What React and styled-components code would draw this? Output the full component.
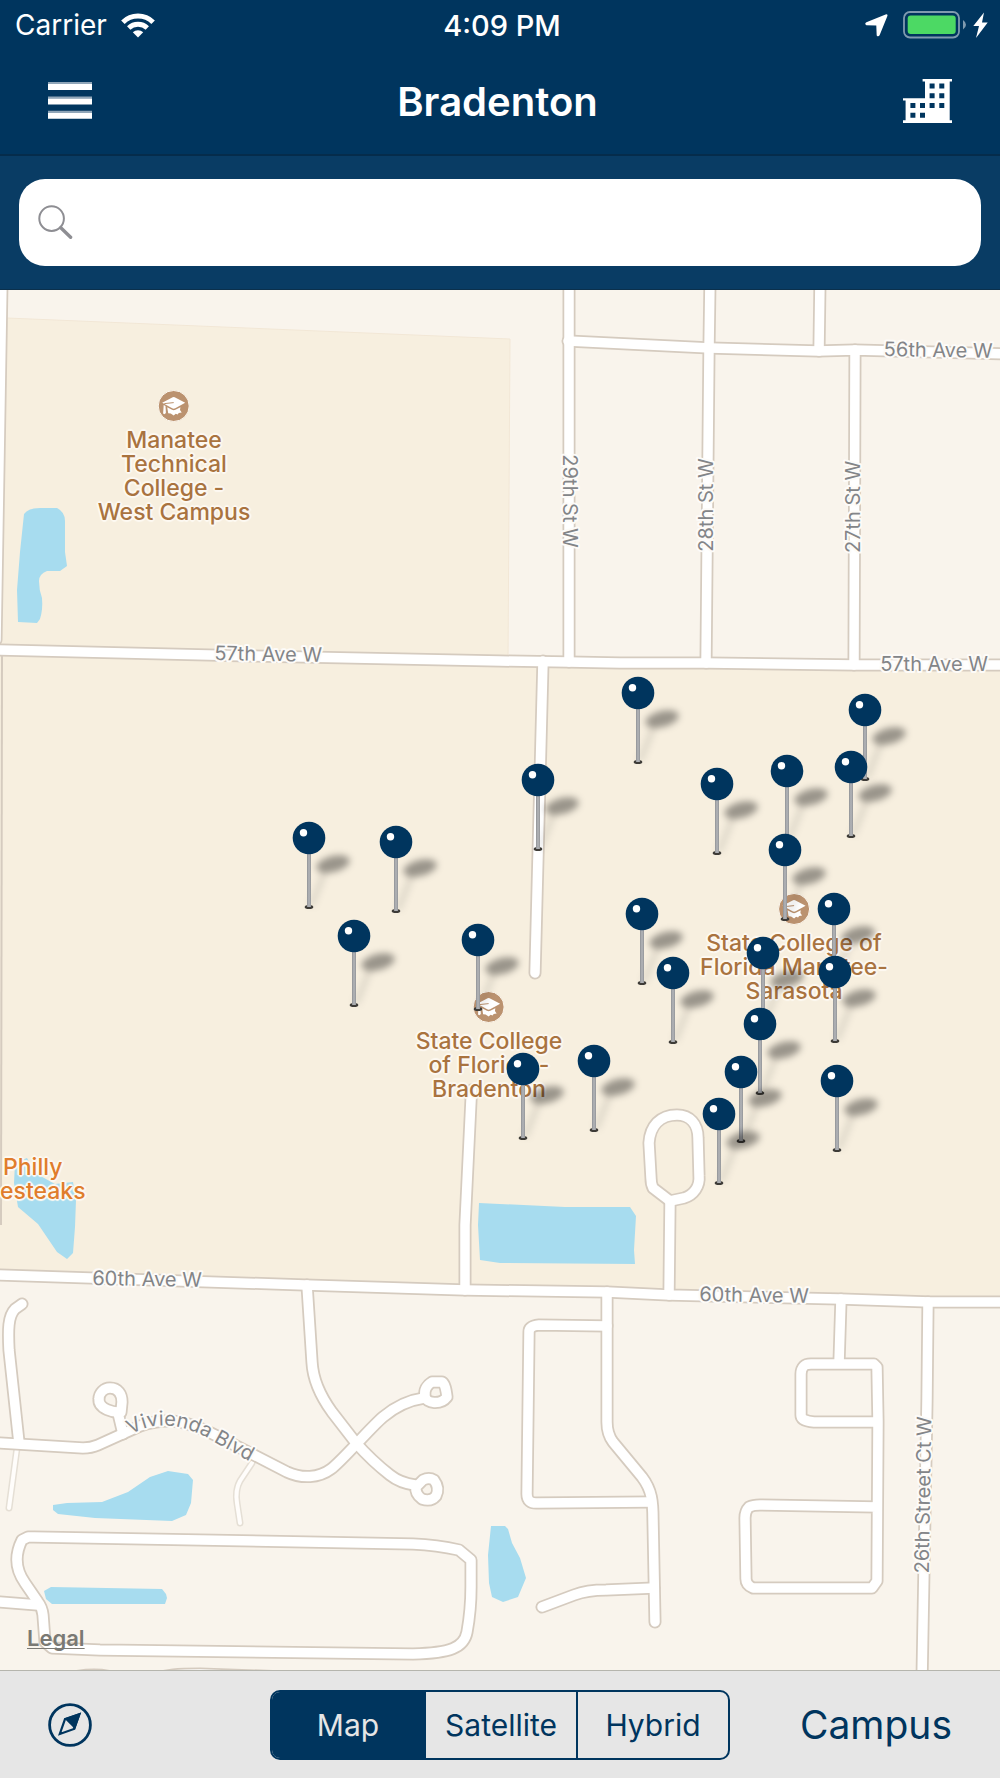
import { useState } from "react";
import styled, { createGlobalStyle } from "styled-components";

// the map is drawn in its own units, everything on it is placed in percent of these
const MAP_WIDTH = 1000;
const MAP_HEIGHT = 1380;

const streets = [
  // 57th, 56th and 60th Ave
  "M-10 360 L0 360 L250 366 L500 371 L568 372 L620 373 L707 373 L855 375 L1010 375",
  "M568 51 L710 58 L818 61 L855 60 L1010 64",
  "M-10 985 L0 985 L305 995 L465 1000 L607 1002 L669 1005 L840 1009 L930 1012 L1010 1012",
  // north side
  "M2 -10 L-4 350",
  "M569 -10 L569 372",
  "M710 -10 L709 58 L706 373",
  "M820 -10 L819 61",
  "M855 60 L854 375",
  "M543 371 L535 683",
  // campus
  "M472 800 L471 810 L465 935 L465 1000",
  "M670 911 L653 898 Q651 894 651 888 L649 853 C650 836 660 825 677 825 C690 825 698 834 698 848 L699 886 C700 896 694 905 684 908 Z",
  "M670 911 L669 1005",
  // south west
  "M307 995 L312 1072 C313 1092 324 1111 332 1122 L356 1153 Q372 1171 390 1185 Q400 1193 415 1195",
  "M-10 1153 L0 1153 L83 1158 Q91 1158 98 1155 L140 1136 C170 1126 190 1132 217 1146 L287 1182 C302 1189 319 1188 331 1179 C342 1171 370 1138 383 1127 C396 1116 410 1110 424 1108",
  "M22 1014 L15 1019 C8 1026 8 1040 9 1060 L19 1153",
  "M123 1144 L118 1123",
  "M-10 1312 L0 1312 L38 1315",
  "M34 1247 L413 1254 Q437 1255 459 1260 L471 1270 L471 1297 Q471 1320 467 1342 C464 1358 450 1363 413 1364 L100 1360 L52 1358 L45 1352 L43 1325 Q42 1317 38 1312 L25 1293 C15 1279 15 1264 22 1250 L28 1247 Z",
  "M58 1391 Q98 1379 122 1391",
  "M150 1391 C166 1384 180 1384 200 1384 L345 1389",
  // south middle
  "M607 1002 L607 1132 Q607 1144 613 1152 L642 1187 C652 1200 653 1212 653 1230 L655 1332",
  "M607 1036 L539 1035 Q529 1036 529 1042 L527 1204 Q527 1214 538 1213 L651 1212",
  "M542 1317 L574 1305 Q587 1300 606 1300 L654 1298",
  // south east
  "M841 1009 L839 1073",
  "M878 1132 L814 1132 Q801 1131 801 1125 L801 1084 Q801 1079 804 1076 Q806 1074 811 1074 L874 1074 L877 1077 L878 1132 L877 1291 L872 1298 L753 1298 Q746 1295 746 1289 L745 1228 Q745 1221 749 1217 Q753 1215 760 1215 L877 1217",
  "M928 1012 L927 1110 L922 1390",
];

const roundabouts = [
  "M110 1098 C118 1098 122 1104 122 1112 L121 1122 C114 1123 98 1119 99 1109 C99 1103 104 1098 110 1098 Z",
  "M432 1092 L442 1092 C445 1094 446 1099 447 1107 C441 1115 426 1114 425 1106 C424 1100 427 1095 432 1092 Z",
  "M423 1190 Q429 1187 434 1190 Q440 1198 436 1206 Q431 1212 422 1209 Q415 1204 416 1197 Z",
];

const paths = [
  "M17 1158 L9 1218",
  "M252 1173 L240 1191 Q235 1200 237 1213 L240 1233",
];

const ponds = [
  "M24 224 Q28 218 40 218 L57 218 Q65 222 65 231 L65 262 L67 276 L60 281 L47 281 Q39 284 39 291 Q39 300 42 308 Q43 320 40 329 L37 333 L18 332 L17 300 L20 262 Z",
  "M15 873 L27 868 L35 883 L55 894 L73 892 L76 910 L75 937 L73 963 L67 969 L57 962 L38 934 L18 917 L14 893 Z",
  "M479 913 L565 917 L630 917 L636 926 L634 960 L635 974 L500 973 L480 970 L478 935 Z",
  "M53 1215 L67 1213 L102 1212 L128 1202 L150 1187 L168 1181 L188 1184 L193 1190 L191 1213 L186 1225 L172 1231 L95 1228 L58 1224 L53 1220 Z",
  "M44 1301 L51 1297 L162 1299 L166 1304 L167 1308 L165 1314 L52 1314 L46 1309 Z",
  "M491 1236 L505 1236 L508 1239 L512 1253 L520 1268 L526 1288 L518 1307 L503 1312 L492 1307 L489 1293 L488 1265 Z",
];

const streetNames = [
  { name: "56th Ave W", x: 938, y: 67, angle: 1 },
  { name: "57th Ave W", x: 268, y: 371, angle: 1 },
  { name: "57th Ave W", x: 934, y: 381, angle: 0 },
  { name: "60th Ave W", x: 147, y: 996, angle: 1 },
  { name: "60th Ave W", x: 754, y: 1012, angle: 1 },
  { name: "29th St W", x: 563, y: 211, angle: 90 },
  { name: "28th St W", x: 713, y: 215, angle: -90 },
  { name: "27th St W", x: 860, y: 217, angle: -90 },
  { name: "26th Street Ct W", x: 930, y: 1205, angle: -89 },
];

const schools = [
  { id: 1, x: 174, y: 100, lines: ["Manatee", "Technical", "College -", "West Campus"] },
  { id: 2, x: 489, y: 701, lines: ["State College", "of Florida -", "Bradenton"] },
  { id: 3, x: 794, y: 603, lines: ["State College of", "Florida Manatee-", "Sarasota"] },
];

// x, y = middle of the pin head, north to south
const pins = [
  [638, 403], [865, 420], [851, 477], [787, 481], [717, 494], [538, 490], [309, 548],
  [396, 552], [785, 560], [834, 619], [642, 624], [354, 646], [478, 650], [763, 663],
  [673, 683], [835, 682], [760, 734], [594, 771], [523, 779], [741, 782], [837, 791],
  [719, 824],
];

const mapTypes = ["Map", "Satellite", "Hybrid"];

export default function App() {
  const [mapType, setMapType] = useState("Map");
  const [search, setSearch] = useState("");

  return (
    <>
      <GlobalStyle />
      <Screen>
        <StatusBar>
          <Carrier>
            Carrier
            <WifiIcon />
          </Carrier>
          <Time>4:09 PM</Time>
          <StatusIcons>
            <LocationIcon />
            <BatteryIcon />
          </StatusIcons>
        </StatusBar>
        <NavBar>
          <NavButton aria-label="Menu"><MenuIcon /></NavButton>
          <Title>Bradenton</Title>
          <NavButton aria-label="Buildings"><BuildingsIcon /></NavButton>
        </NavBar>
        <SearchBar>
          <SearchField>
            <SearchIcon />
            <SearchInput
              type="text"
              aria-label="Search"
              value={search}
              onChange={(e) => setSearch(e.target.value)}
            />
          </SearchField>
        </SearchBar>
        <MapArea>
          <BaseMap />
          {schools.map((school) => (
            <Place key={school.id} $x={school.x} $y={school.y}>
              <SchoolIcon />
              <PlaceName>
                {school.lines.map((line) => <span key={line}>{line}</span>)}
              </PlaceName>
            </Place>
          ))}
          <Restaurant>
            <span>Philly</span>
            <span>esteaks</span>
          </Restaurant>
          {pins.map(([x, y], i) => (
            <PinButton key={i} $x={x} $y={y} aria-label={`Building ${i + 1}`}>
              <PinIcon id={i} />
            </PinButton>
          ))}
          <Legal href="#legal">Legal</Legal>
        </MapArea>
        <Toolbar>
          <ToolButton aria-label="My location"><CompassIcon /></ToolButton>
          <Segments>
            {mapTypes.map((type) => (
              <Segment
                key={type}
                $active={type === mapType}
                aria-pressed={type === mapType}
                onClick={() => setMapType(type)}
              >
                {type}
              </Segment>
            ))}
          </Segments>
          <CampusButton>Campus</CampusButton>
        </Toolbar>
      </Screen>
    </>
  );
}

function BaseMap() {
  return (
    <MapSvg viewBox={`0 0 ${MAP_WIDTH} ${MAP_HEIGHT}`} aria-hidden="true">
      <path d="M7 28 L510 49 L508 372 L0 360 Z" fill="#f7efdf" stroke="#f2e7d6" />
      <path d="M0 360 L568 372 L1000 375 L1000 1012 L607 1002 L0 985 Z" fill="#f7efdf" />
      <path d="M2 366 L1 935" stroke="#d5cbbf" strokeWidth="2" />
      <Ponds>{ponds.map((d) => <path key={d} d={d} />)}</Ponds>
      <Roads $color="#e5dfd5" $width={7}>{paths.map((d) => <path key={d} d={d} />)}</Roads>
      <Roads $color="#fffdfb" $width={4}>{paths.map((d) => <path key={d} d={d} />)}</Roads>
      <StreetLayer color="#d5cbbf" width={13} />
      <StreetLayer color="#ffffff" width={9.5} />
      {streetNames.map((street) => (
        <StreetName
          key={street.name + street.x}
          textAnchor="middle"
          transform={`translate(${street.x} ${street.y}) rotate(${street.angle})`}
        >
          {street.name}
        </StreetName>
      ))}
      <path id="vivienda" d="M131 1145 C150 1132 180 1130 216 1153 L280 1188" fill="none" />
      <StreetName><textPath href="#vivienda">Vivienda Blvd</textPath></StreetName>
    </MapSvg>
  );
}

function StreetLayer({ color, width }) {
  return (
    <Roads $color={color} $width={width}>
      {streets.map((d) => <path key={d} d={d} />)}
      {roundabouts.map((d) => <path key={d} d={d} />)}
    </Roads>
  );
}

function PinIcon({ id }) {
  return (
    <svg width="72" height="92" viewBox="-20 -18 72 92" aria-hidden="true">
      <defs>
        <filter id={`blur${id}`} x="-60%" y="-100%" width="220%" height="300%">
          <feGaussianBlur stdDeviation="3.8" />
        </filter>
        <linearGradient id={`stem${id}`}>
          <stop offset="0" stopColor="#8f9194" />
          <stop offset="0.5" stopColor="#b4b6ba" />
          <stop offset="1" stopColor="#929497" />
        </linearGradient>
      </defs>
      <g filter={`url(#blur${id})`}>
        <ellipse cx="24" cy="26" rx="17" ry="8" transform="rotate(-14 24 26)" fill="#000" opacity="0.38" />
        <path d="M2 68 L16 33" stroke="#000" strokeWidth="6" opacity="0.1" />
      </g>
      <ellipse cx="0" cy="69" rx="4.3" ry="2" fill="#3d3b37" />
      <rect x="-2" y="14" width="4" height="55" fill={`url(#stem${id})`} />
      <circle cx="0" cy="0" r="16.3" fill="#00355e" />
      <circle cx="-5.5" cy="-5.3" r="3.7" fill="#fff" />
    </svg>
  );
}

function SchoolIcon() {
  return (
    <svg width="32" height="32" viewBox="0 0 32 32" aria-hidden="true">
      <circle cx="16" cy="16" r="15.5" fill="#bb926f" stroke="#fcf7ee" strokeWidth="1" />
      <path d="M4.5 12.7 L15 7.2 Q16 6.8 17 7.2 L27.5 12.7 L17.5 18.3 Q16 19 14.5 18.3 Z" fill="#fff" />
      <path d="M9.5 17.2 L14.3 19.8 Q16 20.6 17.7 19.8 L22.7 17.2 L22.3 20 L24 22.5 L21 23 L20 24.5 L18 23.8 L16 25.5 L13 23.6 L10.5 23.3 Z" fill="#fff" />
      <path d="M16 12.6 L6.8 13.6 L6.8 17" fill="none" stroke="#bb926f" strokeWidth="1" />
      <path d="M6 15 L7.8 16 L8.2 23 L6.7 24.2 L5.4 23.4 Z" fill="#fff" />
    </svg>
  );
}

function WifiIcon() {
  return (
    <svg width="34" height="25" viewBox="0 0 34 25" aria-hidden="true">
      <path d="M1.9 9.3 A21.5 21.5 0 0 1 32.1 9.3" fill="none" stroke="#fff" strokeWidth="5" />
      <path d="M7.7 15 A13.4 13.4 0 0 1 26.3 15" fill="none" stroke="#fff" strokeWidth="4.8" />
      <path d="M11.8 19.3 A7.6 7.6 0 0 1 22.2 19.3 L17 24.6 Z" fill="#fff" />
    </svg>
  );
}

function LocationIcon() {
  return (
    <svg width="23" height="23" viewBox="0 0 23 23" aria-hidden="true">
      <path d="M20.6 0.4 Q22.9 -0.2 22.4 2 L14.6 21.2 Q13.2 23.4 11.7 21.4 L11.3 11.6 L1.4 11.2 Q-0.9 9.6 1.4 8.2 Z" fill="#fff" />
    </svg>
  );
}

function BatteryIcon() {
  return (
    <svg width="86" height="28" viewBox="0 0 86 28" aria-hidden="true">
      <rect x="1" y="1" width="55" height="25.5" rx="6" fill="none" stroke="#7f9aaf" strokeWidth="1.8" />
      <rect x="4.7" y="4.5" width="48" height="18.5" rx="3" fill="#4cd964" />
      <path d="M60 9 Q63 11 63 13.8 Q63 16.5 60 18.6 Z" fill="#7f9aaf" />
      <path d="M81 1.5 L70.3 15 H76 L73 27 L84.7 11.5 H79 Z" fill="#fff" />
    </svg>
  );
}

function MenuIcon() {
  return (
    <svg width="44" height="38" viewBox="0 0 44 38" aria-hidden="true">
      <path d="M0 0h44v2H0zM0 14.4h44v2H0zM0 28.8h44v2H0z" fill="#8fa5b8" />
      <path d="M0 2h44v6H0zM0 16.4h44v6H0zM0 30.8h44v6H0z" fill="#fff" />
    </svg>
  );
}

function BuildingsIcon() {
  return (
    <svg width="49" height="44" viewBox="0 0 49 44" aria-hidden="true">
      <path d="M19.6 0H49v2.4h-2.3v38.8H49V44H0v-2.8h2.6V21.6H0v-2.4h22V2.4h-2.4z" fill="#fff" />
      <path
        d="M26.6 4.4h5v5h-5zM36.3 4.4h5v5h-5zM26.6 14.2h5v5h-5zM36.3 14.2h5v5h-5zM26.6 24h5v5h-5zM36.3 24h5v5h-5zM7.4 24h5v5h-5zM17 24h5v5h-5zM7.4 33.7h5v5h-5zM17 33.7h5v5h-5z"
        fill="#00355e"
      />
    </svg>
  );
}

function SearchIcon() {
  return (
    <svg width="35" height="35" viewBox="0 0 35 35" fill="none" stroke="#8e8e93" aria-hidden="true">
      <circle cx="13.6" cy="13.6" r="12.3" strokeWidth="2" />
      <path d="M22.8 22.8 L32.6 32.2" strokeWidth="3.4" strokeLinecap="round" />
    </svg>
  );
}

function CompassIcon() {
  return (
    <svg width="44" height="44" viewBox="0 0 44 44" aria-hidden="true">
      <circle cx="22" cy="22" r="20.4" fill="none" stroke="#00355e" strokeWidth="2.8" />
      <path d="M31.4 11.2 L17 16.2 L11.8 31 L26 26 Z" fill="none" stroke="#00355e" strokeWidth="2.2" />
      <path d="M33 9.6 L16 15.4 L18.6 17.8 L24.4 23.6 L27 27 Z" fill="#00355e" />
    </svg>
  );
}


const GlobalStyle = createGlobalStyle`
  * {
    box-sizing: border-box;
  }
  body {
    margin: 0;
    background: #e6e6e6;
    font-family: Inter, 'Liberation Sans', sans-serif;
  }
  button {
    padding: 0;
    border: none;
    background: none;
    font-family: inherit;
    cursor: pointer;
  }
  svg {
    display: block;
  }
`

const Screen = styled.div`
  display: flex;
  flex-direction: column;
  min-height: 100vh;
`

const StatusBar = styled.div`
  display: grid;
  grid-template-columns: 1fr auto 1fr;
  align-items: center;
  height: 50px;
  padding: 0 11px 0 15px;
  background: #00355e;
  color: #fff;
  font-size: 28px;
`

const Carrier = styled.div`
  display: flex;
  align-items: center;
  gap: 14px;
`

const Time = styled.div`
  font-size: 29px;
  font-weight: 500;
`

const StatusIcons = styled.div`
  display: flex;
  align-items: center;
  justify-content: flex-end;
  gap: 15px;
`

const NavBar = styled.header`
  display: flex;
  align-items: center;
  justify-content: space-between;
  height: 106px;
  padding: 0 48px 2px;
  background: #00355e;
  border-bottom: 2px solid #052c4b;
`

const NavButton = styled.button`
  display: flex;
`

const Title = styled.h1`
  margin: 0;
  color: #fff;
  font-size: 40px;
  font-weight: 600;
`

const SearchBar = styled.div`
  padding: 23px 19px;
  background: #093c64;
  border-bottom: 1px solid #0b304c;
`

const SearchField = styled.label`
  display: flex;
  align-items: center;
  gap: 14px;
  height: 87px;
  padding: 0 19px 1px;
  border-radius: 26px;
  background: #fff;
`

const SearchInput = styled.input`
  flex: 1;
  min-width: 0;
  height: 100%;
  border: none;
  outline: none;
  background: transparent;
  color: #222;
  font-family: inherit;
  font-size: 30px;
`

const MapArea = styled.main`
  position: relative;
  width: 100%;
  aspect-ratio: ${MAP_WIDTH} / ${MAP_HEIGHT};
  overflow: hidden;
  background: #f9f4ec;
`

const MapSvg = styled.svg`
  width: 100%;
  height: 100%;
`

const Roads = styled.g`
  fill: none;
  stroke: ${(props) => props.$color};
  stroke-width: ${(props) => props.$width};
  stroke-linecap: round;
  stroke-linejoin: round;
`

const Ponds = styled.g`
  fill: #a7dcef;
`

const StreetName = styled.text`
  font-size: 20px;
  fill: #838588;
  stroke: #fdfbf8;
  stroke-width: 4px;
  stroke-linejoin: round;
  paint-order: stroke;
`

const Halo = styled.div`
  display: flex;
  flex-direction: column;
  font-size: 23px;
  font-weight: 500;
  line-height: 24px;
  white-space: nowrap;
  text-shadow: 2px 0 1px #fdf9f2, -2px 0 1px #fdf9f2, 0 2px 1px #fdf9f2, 0 -2px 1px #fdf9f2,
    1px 1px 1px #fdf9f2, -1px -1px 1px #fdf9f2, 1px -1px 1px #fdf9f2, -1px 1px 1px #fdf9f2;
`

const Place = styled.div`
  position: absolute;
  left: ${(props) => (props.$x / MAP_WIDTH) * 100}%;
  top: ${(props) => (props.$y / MAP_HEIGHT) * 100}%;
  display: flex;
  flex-direction: column;
  align-items: center;
  gap: 6px;
  transform: translateX(-50%);
`

const PlaceName = styled(Halo)`
  align-items: center;
  color: #a9733f;
`

const Restaurant = styled(Halo)`
  position: absolute;
  left: 0;
  top: ${(865 / MAP_HEIGHT) * 100}%;
  color: #e07d2c;

  span:first-child {
    padding-left: 3px;
  }
`

const PinButton = styled.button`
  position: absolute;
  left: ${(props) => (props.$x / MAP_WIDTH) * 100}%;
  top: ${(props) => (props.$y / MAP_HEIGHT) * 100}%;
  margin: -18px 0 0 -20px;
`

const Legal = styled.a`
  position: absolute;
  left: 27px;
  bottom: 19px;
  color: #7a7974;
  font-size: 22px;
  font-weight: 600;
  line-height: 26px;
  text-decoration: underline;
  text-decoration-thickness: 1px;
  text-underline-offset: 2px;
  text-decoration-skip-ink: none;
`

const Toolbar = styled.footer`
  display: grid;
  grid-template-columns: 1fr auto 1fr;
  align-items: center;
  flex: 1;
  min-height: 108px;
  padding: 0 48px;
  border-top: 1px solid #b5b5ad;
  background: #e6e6e6;
`

const ToolButton = styled.button`
  justify-self: start;
`

const Segments = styled.div`
  display: flex;
  height: 70px;
  border: 2px solid #00355e;
  border-radius: 10px;
  overflow: hidden;
`

const Segment = styled.button`
  width: 152px;
  background: ${(props) => (props.$active ? "#00355e" : "transparent")};
  color: ${(props) => (props.$active ? "#e6e6e6" : "#00355e")};
  font-size: 30px;

  & + & {
    border-left: 2px solid #00355e;
  }
`

const CampusButton = styled.button`
  justify-self: end;
  color: #00355e;
  font-size: 39px;
`
